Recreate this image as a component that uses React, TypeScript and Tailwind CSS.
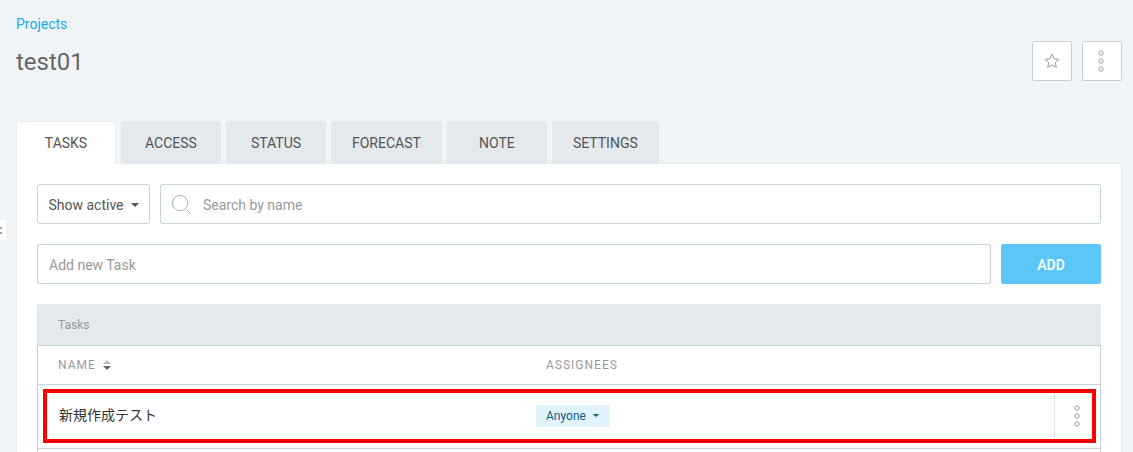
const tabs = ['TASKS', 'ACCESS', 'STATUS', 'FORECAST', 'NOTE', 'SETTINGS']

function Dots({ className }: { className?: string }) {
  return (
    <svg width="6" height="22" viewBox="0 0 6 22" fill="none" stroke="#9a9a9a" strokeWidth="1" className={className}>
      <circle cx="3" cy="3" r="2.2" />
      <circle cx="3" cy="11" r="2.2" />
      <circle cx="3" cy="19" r="2.2" />
    </svg>
  )
}

export default function App() {
  return (
    <div className="relative w-[1133px] h-[452px] overflow-hidden bg-[#f2f5f8] font-['Roboto',_'Noto_Sans_CJK_JP',_sans-serif] text-[14px] text-[#555]">
      {/* collapsed sidebar handle */}
      <div className="absolute left-0 top-[220px] w-[6px] h-[20px] bg-white flex flex-col items-start justify-center gap-[3px]">
        <span className="w-[2px] h-[2px] bg-[#9aa5ad]" />
        <span className="w-[2px] h-[2px] bg-[#9aa5ad]" />
      </div>

      <div className="pl-[16px] pr-[11px] pt-[16px]">
        <a className="block text-[14px] leading-[16px] text-[#14a9f5]">Projects</a>

        <div className="flex items-start justify-between mt-[9px] h-[62px]">
          <h1 className="text-[24px] leading-[28px] text-[#666] mt-[7px]">test01</h1>
          <div className="flex gap-[10px]">
            <button className="w-[40px] h-[40px] bg-white border border-[#c5d3dd] rounded-[2px] flex items-center justify-center">
              <svg width="16" height="16" viewBox="0 0 16 16" fill="none" stroke="#8fa3b0" strokeWidth="1">
                <path d="M8 1.2l2 4.6 5 .5-3.8 3.2 1.2 5L8 11.8l-4.4 2.7 1.2-5L1 6.3l5-.5z" />
              </svg>
            </button>
            <button className="w-[40px] h-[40px] bg-white border border-[#c5d3dd] rounded-[2px] flex items-center justify-center pr-[2px]">
              <Dots />
            </button>
          </div>
        </div>

        <div className="flex gap-[5px] mt-[18px] h-[42px] relative z-10">
          {tabs.map((tab, i) => (
            <div
              key={tab}
              className={`min-w-[100px] px-[21px] flex items-center justify-center rounded-t-[2px] ${
                i === 0 ? 'bg-white border border-b-0 border-[#e6ecf1] h-[43px] pt-[1px]' : 'bg-[#e4e9ed] h-[42px] pt-[2px]'
              }`}
            >
              {tab}
            </div>
          ))}
        </div>

        <div className="bg-white border border-[#e6ecf1] px-[20px] pt-[20px] h-[300px]">
          <div className="flex gap-[10px]">
            <button className="w-[113px] h-[40px] pt-[2px] bg-white border border-[#c5d3dd] rounded-[2px] flex items-center justify-center gap-[7px]">
              Show active
              <span className="w-0 h-0 border-x-[4px] border-x-transparent border-t-[4px] border-t-[#555]" />
            </button>
            <div className="flex-1 h-[40px] border border-[#c5d3dd] rounded-[2px] flex items-center pl-[10px]">
              <svg width="21" height="21" viewBox="0 0 22 22" fill="none" stroke="#9fb0ba" strokeWidth="1">
                <circle cx="9.5" cy="9.5" r="8" />
                <path d="M15.5 15.5L21 21" />
              </svg>
              <span className="ml-[11px] pt-[2px] text-[#999]">Search by name</span>
            </div>
          </div>

          <div className="flex gap-[10px] mt-[20px]">
            <div className="flex-1 h-[40px] pt-[2px] border border-[#c5d3dd] rounded-[2px] flex items-center pl-[11px] text-[#999]">
              Add new Task
            </div>
            <button className="w-[100px] h-[40px] pt-[2px] bg-[#5bc7f8] rounded-[2px] text-white font-medium">ADD</button>
          </div>

          <div className="mt-[20px] h-[41px] bg-[#e4e9ed] flex items-center pl-[21px] text-[12px] text-[#999] rounded-t-[2px]">
            Tasks
          </div>
          <div className="border border-[#c5d3dd]">
            <div className="flex items-center h-[38px] text-[12px] tracking-[1px] text-[#999]">
              <div className="w-[508px] pl-[20px] flex items-center gap-[6px]">
                NAME
                <svg width="10" height="12" viewBox="0 0 10 12">
                  <path d="M5 1l4 4H1z" fill="#bbb" />
                  <path d="M5 11l4-4H1z" fill="#666" />
                </svg>
              </div>
              <div>ASSIGNEES</div>
            </div>
            <div className="flex items-center h-[64px] pb-[2px] border-t border-[#c5d3dd] text-[#333]">
              <div className="w-[498px] pl-[21px] text-[14px]">新規作成テスト</div>
              <div className="flex-1">
                <span className="flex items-center gap-[7px] h-[22px] w-[74px] pl-[10px] bg-[#e1f4fd] rounded-[2px] text-[12px] text-[#0f5a86]">
                  Anyone
                  <span className="w-0 h-0 border-x-[3px] border-x-transparent border-t-[3px] border-t-[#0f5a86]" />
                </span>
              </div>
              <div className="w-[46px] h-[42px] pr-[1px] border-l border-dotted border-[#c9c9c9] flex items-center justify-center">
                <Dots />
              </div>
            </div>
            <div className="border-t border-[#c5d3dd] h-[10px]" />
          </div>
        </div>
      </div>

      {/* red annotation frame */}
      <div className="absolute left-[43px] top-[389px] w-[1053px] h-[54px] border-[4px] border-[#ff0000] pointer-events-none" />
    </div>
  )
}
